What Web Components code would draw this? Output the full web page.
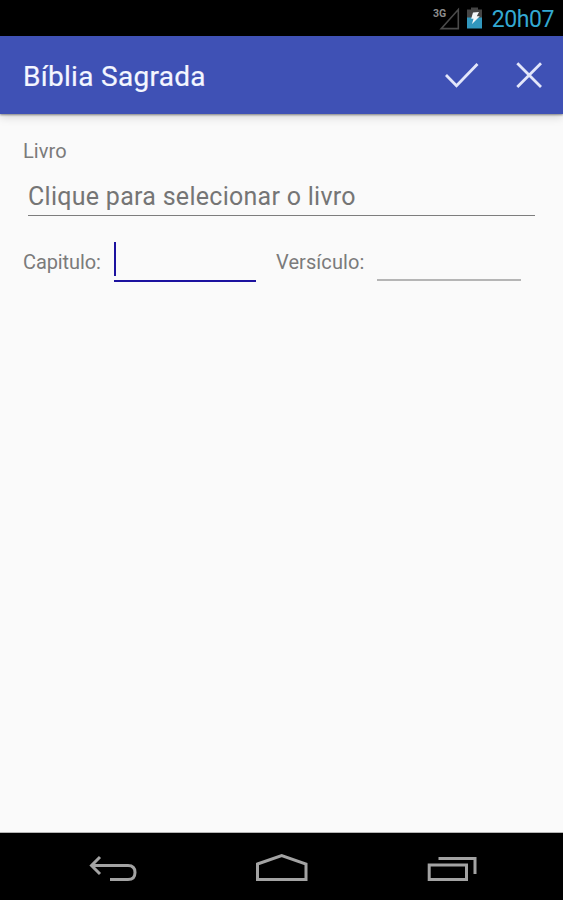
<!DOCTYPE html>
<html lang="pt-BR">
<head>
<meta charset="utf-8">
<title>Bíblia Sagrada</title>
<style>
body { margin: 0; font-family: Roboto, "Liberation Sans", sans-serif; }
</style>
</head>
<body>
<phone-screen>
  <status-bar slot="status">20h07</status-bar>
  <app-bar slot="header">Bíblia Sagrada</app-bar>
  <verse-form></verse-form>
  <nav-bar slot="nav"></nav-bar>
</phone-screen>
<script>
function define(name, markup) {
  customElements.define(name, class extends HTMLElement {
    constructor() {
      super();
      const t = document.createElement('template');
      t.innerHTML = markup;
      this.attachShadow({ mode: 'open' }).append(t.content.cloneNode(true));
    }
  });
}

define('phone-screen', `
<style>
:host { display: grid; grid-template-rows: 36px 78px 1fr 67px; width: 563px; height: 900px; background: #fafafa; overflow: hidden; }
main { min-height: 0; border-bottom: 1px solid #b5b5b5; }
</style>
<slot name="status"></slot><slot name="header"></slot><main><slot></slot></main><slot name="nav"></slot>`);

define('status-bar', `
<style>
:host { display: flex; align-items: center; justify-content: flex-end; background: #000; color: #33a9d2; padding-right: 9px; font-size: 23px; letter-spacing: -.4px; line-height: 36px; }
svg { flex: none; margin-right: 8px; height: 36px; width: 54px; }
.time { padding-top: 3px; }
</style>
<svg viewBox="430 0 54 36" fill="none">
  <text x="433" y="16.5" fill="#8d8d8d" font-size="10.5" font-weight="700" letter-spacing="0" font-family="Roboto, sans-serif">3G</text>
  <path d="M458.3 9.5V28.6H441.2Z" stroke="#4b4b4b" stroke-width="1.6"/>
  <path d="M467 9.5h4V7.5h7v2h4V18h-15z" fill="#454545"/>
  <path d="M467 17.5h15V28.5h-15z" fill="#3197bd"/>
  <path d="M473 12.5l6-.5-2.2 4.2h3L472 24l1.5-5.2h-2.3z" fill="#f4f8fa"/>
</svg><span class="time"><slot></slot></span>`);

define('app-bar', `
<style>
:host { display: flex; align-items: center; background: #3f51b5; color: #f4f6ff; padding: 0 19px 0 23px; position: relative; box-shadow: 0 1px 2px rgba(0,0,0,.42), 0 3px 9px rgba(0,0,0,.15); }
h1 { flex: 1; margin: 0; padding-top: 4px; font-size: 28px; font-weight: 400; -webkit-text-stroke: .2px; line-height: 34px; white-space: nowrap; letter-spacing: .3px; }
svg { width: 34px; height: 30px; fill: none; stroke: #e3e6fa; stroke-width: 2.8; }
svg + svg { width: 30px; margin-left: 35px; }
</style>
<h1><slot></slot></h1>
<svg viewBox="445 60 34 30"><path d="M446 75L456.5 85.7L477.5 64"/></svg>
<svg viewBox="514 60 30 30"><path d="M517.3 63.2L541 87M541 63.2L517.3 87"/></svg>`);

define('line-field', `
<style>
:host { display: flex; align-items: flex-end; box-sizing: border-box; height: 38px; color: #757575; }
:host([light]) { border-bottom: 2px solid #b5b5b5; }
:host([active]) { border-bottom: 2px solid #1c129f; }
i { display: none; width: 2.4px; height: 34px; background: #1c129f; margin: 0 0 4px; }
:host([active]) i { display: block; }
</style>
<i></i><slot></slot>`);

define('verse-form', `
<style>
:host { display: block; padding: 25px 28px 0 23px; color: #7b7b7b; font-size: 20px; letter-spacing: .08px; }
.label { line-height: 24px; }
.book { height: 44px; margin: 9px 0 0 5px; border-bottom: 1px solid #7d7d7d; font-size: 25px; line-height: 30px; letter-spacing: .28px; }
.book span { padding-bottom: 3px; }
.row { display: grid; grid-template-columns: 91px 142px 20px 101px 144px; align-items: end; height: 40px; margin-top: 25px; }
.row > .label { padding-bottom: 8.6px; }
.row > .label:first-child { letter-spacing: -.1px; }
.ch { height: 41px; grid-column: 2; margin-bottom: .6px; }
.vs-label { grid-column: 4; }
.vs { grid-column: 5; margin-bottom: 2px; }
</style>
<div class="label">Livro</div>
<line-field class="book"><span>Clique para selecionar o livro</span></line-field>
<div class="row">
  <span class="label">Capitulo:</span><line-field class="ch" active></line-field>
  <span class="label vs-label">Versículo:</span><line-field class="vs" light></line-field>
</div>`);

define('nav-bar', `
<style>
:host { display: grid; grid-template-columns: 48px 52px 50px; justify-content: space-between; align-items: center; padding: 2px 86px 0 89px; background: #000; }
svg { height: 30px; width: 100%; fill: none; stroke: #a3a3a3; stroke-width: 3; }
</style>
<svg viewBox="89 853 48 30"><path d="M100 857L91.5 865.5L100 874M92 865.5H128C132.8 865.5 135 868.5 135 872.5S132.8 879.5 128 879.5H110"/></svg>
<svg viewBox="256 853 52 30"><path d="M257.5 864L281.7 855.5L306 864V879.5H257.5Z"/></svg>
<svg viewBox="427 853 50 30"><path d="M429.2 865H466.5V879.5H429.2ZM438.5 858.5H475V874"/></svg>`);
</script>
</body>
</html>
